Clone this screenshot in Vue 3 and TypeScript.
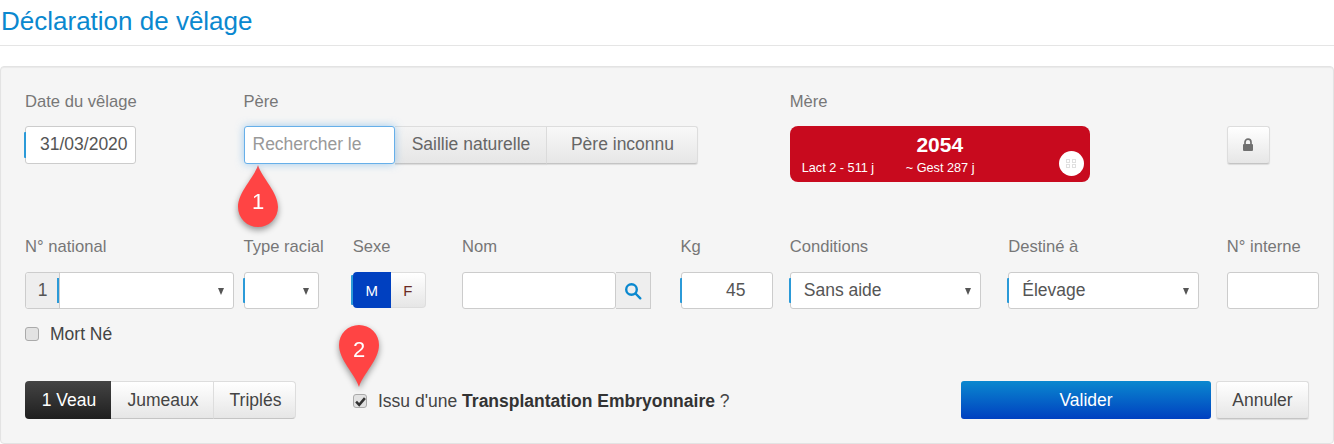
<script setup lang="ts">
const sexes = [
  { label: 'M', active: true },
  { label: 'F', active: false },
]
const litter = ['1 Veau', 'Jumeaux', 'Triplés']
</script>

<template>
  <div class="page">
    <h1 class="title">Déclaration de vêlage</h1>
    <form class="panel" @submit.prevent>
      <div class="grid first">
        <div class="c2">
          <div class="lbl">Date du vêlage</div>
          <div class="ctl date mark"><span>31/03/2020</span></div>
        </div>
        <div class="c5">
          <div class="lbl">Père</div>
          <div class="pere">
            <div class="ctl search"><span>Rechercher le</span></div>
            <button type="button" class="btn saillie">Saillie naturelle</button>
            <button type="button" class="btn inconnu">Père inconnu</button>
          </div>
        </div>
        <div class="c4">
          <div class="lbl">Mère</div>
          <div class="mother">
            <div class="num">2054</div>
            <div class="meta"><span class="lact">Lact 2 - 511 j</span><span>~ Gest 287 j</span></div>
            <span class="dot">
              <svg width="11" height="9" viewBox="0 0 11 9" fill="none" stroke="#e0e0e0" stroke-width="1">
                <rect x="0.5" y="0.5" width="3" height="3" /><rect x="6.5" y="0.5" width="3" height="3" />
                <rect x="0.5" y="5.5" width="3" height="3" /><rect x="6.5" y="5.5" width="3" height="3" />
              </svg>
            </span>
          </div>
        </div>
        <div class="c1">
          <div class="lbl">&nbsp;</div>
          <button type="button" class="btn lock" aria-label="Verrouiller">
            <svg width="12" height="14" viewBox="0 0 12 14">
              <path d="M3 6V4.2a3 3 0 0 1 6 0V6" fill="none" stroke="#707070" stroke-width="1.7" />
              <rect x="1" y="6" width="10" height="7" rx="1" fill="#707070" />
            </svg>
          </button>
        </div>
      </div>

      <div class="grid second">
        <div class="c2">
          <div class="lbl">N° national</div>
          <div class="ctl nat">
            <span class="one">1</span>
            <span class="sel-body"><i class="caret"></i></span>
          </div>
        </div>
        <div class="c1">
          <div class="lbl">Type racial</div>
          <div class="ctl type mark"><i class="caret"></i></div>
        </div>
        <div class="c1">
          <div class="lbl">Sexe</div>
          <div class="sex mark">
            <button v-for="s in sexes" :key="s.label" type="button" :class="['sx', { on: s.active }]">{{ s.label }}</button>
          </div>
        </div>
        <div class="c2">
          <div class="lbl">Nom</div>
          <div class="nom">
            <input class="ctl nom-input" type="text" aria-label="Nom" />
            <span class="addon">
              <svg width="18" height="18" viewBox="0 0 18 18" fill="none" stroke="#0a88cf" stroke-width="2.4">
                <circle cx="7.5" cy="7.5" r="5.3" /><path d="M11.5 11.5L16.3 16.3" stroke-linecap="round" />
              </svg>
            </span>
          </div>
        </div>
        <div class="c1">
          <div class="lbl">Kg</div>
          <div class="ctl kg mark"><span>45</span></div>
        </div>
        <div class="c2">
          <div class="lbl">Conditions</div>
          <div class="ctl wide mark"><span>Sans aide</span><i class="caret"></i></div>
        </div>
        <div class="c2">
          <div class="lbl">Destiné à</div>
          <div class="ctl wide mark"><span>Élevage</span><i class="caret"></i></div>
        </div>
        <div class="c1">
          <div class="lbl">N° interne</div>
          <input class="ctl interne" type="text" aria-label="N° interne" />
        </div>
      </div>

      <div class="mort"><span class="box"></span><span>Mort Né</span></div>

      <div class="actions">
        <div class="litter">
          <button v-for="(l, i) in litter" :key="l" type="button" :class="['lit', { on: i === 0 }]">{{ l }}</button>
        </div>
        <div class="te">
          <span class="box">
            <svg width="11" height="11" viewBox="0 0 10 10"><path d="M1 5.2L3.8 8L9 2" fill="none" stroke="#333" stroke-width="2.3" /></svg>
          </span>
          <span>Issu d'une <b>Transplantation Embryonnaire</b> ?</span>
        </div>
        <button type="button" class="valider">Valider</button>
        <button type="button" class="btn annuler">Annuler</button>
      </div>

      <div class="pin pin1">
        <svg width="40" height="62" viewBox="0 0 40 62"><path d="M20 62C16 49 0 35 0 20A20 20 0 0 1 40 20C40 35 24 49 20 62Z" fill="#ff4444" /></svg>
        <span>1</span>
      </div>
      <div class="pin pin2">
        <svg width="40" height="62" viewBox="0 0 40 62"><path d="M20 62C16 49 0 35 0 20A20 20 0 0 1 40 20C40 35 24 49 20 62Z" fill="#ff4444" /></svg>
        <span>2</span>
      </div>
    </form>
  </div>
</template>

<style>
html, body { margin: 0; background: #fff; }
</style>

<style scoped>
.page { width: 1334px; height: 444px; overflow: hidden; font-family: "Liberation Sans", Arial, sans-serif; font-size: 17.5px; color: #555; }
.title { margin: 0; height: 45px; box-sizing: content-box; border-bottom: 1px solid #e5e5e5; padding-left: 1px; font-size: 26px; line-height: 42px; font-weight: 400; color: #0a88cf; }
.panel { position: relative; box-sizing: border-box; margin-top: 20px; height: 378px; padding: 24px 0 0 24px; background: #f5f5f5; border: 1px solid #e3e3e3; border-radius: 4px; box-shadow: inset 0 1px 1px rgba(0,0,0,.05); }
.grid { display: grid; grid-template-columns: repeat(11, 109.25px) 92px; }
.second { margin-top: 54px; }
.c1 { grid-column: span 1; }
.c2 { grid-column: span 2; }
.c4 { grid-column: span 4; }
.c5 { grid-column: span 5; }
.lbl { height: 20px; line-height: 22px; font-size: 16.6px; color: #777; margin-bottom: 15px; white-space: nowrap; }
.second .lbl { margin-bottom: 16px; }
.ctl { position: relative; display: flex; align-items: center; box-sizing: border-box; height: 38px; background: #fff; border: 1px solid #ccc; border-radius: 3px; color: #555; font: inherit; outline: none; }
.second .ctl { height: 37px; }
.mark { position: relative; }
.mark::before { content: ""; position: absolute; left: -2px; top: 5px; bottom: 5px; width: 2px; background: #2b9ad8; border-radius: 1px 0 0 1px; }
.date { width: 111px; padding: 0 0 2px 14px; }
.pere { display: flex; }
.search { width: 151px; padding: 0 0 2px 8px; border-color: #66afe9; color: #999; box-shadow: 0 0 8px rgba(102,175,233,.6); position: relative; z-index: 1; }
.btn { box-sizing: border-box; height: 38px; font: inherit; color: #555; border: 1px solid #ddd; border-bottom-color: #c4c4c4; border-radius: 3px; background: linear-gradient(#fff, #e6e6e6); padding: 0; box-shadow: 0 1px 1px rgba(0,0,0,.1); }
.saillie { width: 152px; border-radius: 0; border-left: 0; color: #666; padding: 0 0 2px 2px; background: linear-gradient(#f4f4f4, #e6e6e6); }
.inconnu { width: 151px; border-radius: 0 3px 3px 0; border-left: 0; color: #666; padding: 0 0 2px 2px; background: linear-gradient(#f8f8f8, #e6e6e6); }
.mother { position: relative; box-sizing: border-box; width: 300px; height: 56px; background: #c80a1e; border-radius: 8px; color: #fff; }
.num { text-align: center; font-size: 21px; font-weight: 700; line-height: 24px; padding-top: 7px; }
.meta { display: flex; padding: 3px 0 0 12px; font-size: 12.7px; line-height: 16px; }
.lact { width: 104px; }
.dot { position: absolute; left: 269px; top: 25px; width: 25px; height: 25px; border-radius: 50%; background: #fff; display: flex; align-items: center; justify-content: center; }
.lock { width: 43px; display: flex; align-items: center; justify-content: center; }
.nat { width: 209px; overflow: visible; }
.one { box-sizing: border-box; width: 34px; height: 100%; display: flex; align-items: center; justify-content: center; background: #eee; border-right: 1px solid #ccc; border-radius: 3px 0 0 3px; color: #555; }
.nat .one { position: relative; }
.nat .one::after { content: ""; position: absolute; right: 0; top: 5px; bottom: 5px; width: 2px; background: #2b9ad8; }
.sel-body { flex: 1; }
.caret { position: absolute; right: 9px; top: 15px; width: 0; height: 0; border-left: 3.5px solid transparent; border-right: 3.5px solid transparent; border-top: 7px solid #555; }
.type { width: 75px; }
.sex { display: flex; width: 73px; height: 36px; margin-left: 0; }
.sex::before { top: 3px; bottom: 3px; }
.sx { box-sizing: border-box; height: 36px; border: 1px solid #ddd; font: inherit; font-size: 15px; padding: 0; background: linear-gradient(#fff, #e6e6e6); color: #6a2a24; border-left: 0; border-radius: 0 4px 4px 0; width: 35px; }
.sx.on { width: 38px; background: #0040c0; color: #fff; border: 0; border-radius: 4px 0 0 4px; }
.nom { display: flex; }
.nom-input { width: 154px; padding: 0; }
.addon { box-sizing: border-box; width: 35px; height: 37px; display: flex; align-items: center; justify-content: center; background: #eee; border: 1px solid #ccc; border-left: 0; }
.kg { width: 92px; justify-content: flex-end; padding-right: 26px; }
.wide { width: 191px; padding-left: 13px; }
.interne { width: 92px; }
.mort { display: flex; align-items: center; gap: 11px; height: 20px; margin-top: 15px; color: #444; }
.box { box-sizing: border-box; width: 14px; height: 14px; display: inline-flex; align-items: center; justify-content: center; flex: none; background: #e2e2e2; border: 1px solid #aaa; border-radius: 3px; }
.actions { display: flex; align-items: center; height: 38px; margin-top: 37px; }
.litter { display: flex; width: 328px; }
.lit { box-sizing: border-box; height: 38px; font: inherit; padding: 0 0 0 2px; color: #444; border: 1px solid #ddd; border-left: 0; border-bottom-color: #c4c4c4; background: linear-gradient(#fff, #e6e6e6); width: 103px; }
.lit:nth-child(1) { width: 86px; border: 0; color: #fff; background: linear-gradient(#444, #1f1f1f); border-radius: 4px 0 0 4px; }
.lit:nth-child(3) { width: 82px; border-radius: 0 4px 4px 0; }
.te { display: flex; align-items: center; gap: 11px; width: 608px; padding-top: 2px; color: #444; }
.te b { color: #333; }
.valider { box-sizing: border-box; width: 250px; height: 38px; font: inherit; color: #fff; border: 0; border-radius: 3px; background: linear-gradient(#0a88cf, #0040c0); }
.annuler { width: 93px; margin-left: 5px; color: #444; }
.pin { position: absolute; width: 40px; height: 62px; filter: drop-shadow(0 3px 3px rgba(0,0,0,.4)); }
.pin svg { display: block; }
.pin span { position: absolute; left: 0; right: 0; text-align: center; color: #fff; font-size: 22px; line-height: 26px; }
.pin1 { left: 237px; top: 98px; }
.pin1 svg { transform: rotate(180deg); }
.pin1 span { top: 24px; }
.pin2 { left: 338px; top: 258px; }
.pin2 span { top: 12px; }
</style>
